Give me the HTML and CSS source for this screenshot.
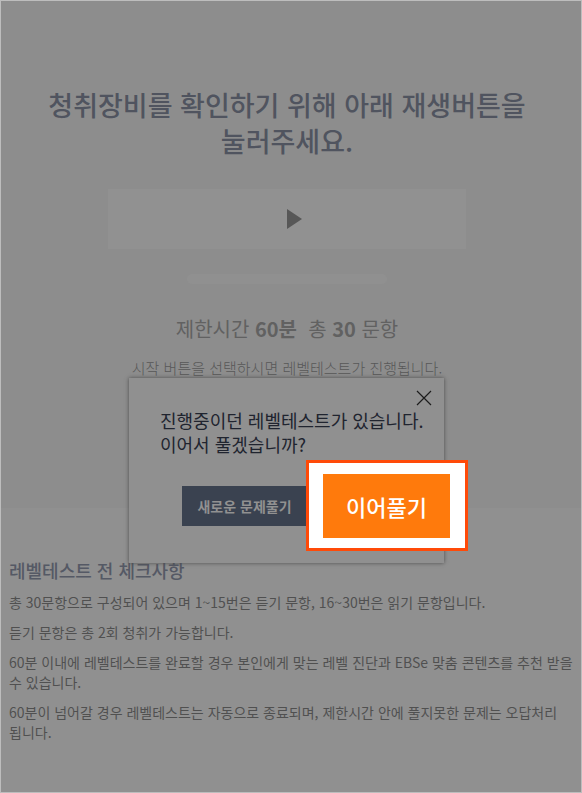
FILE: index.html
```html
<!DOCTYPE html>
<html lang="ko">
<head>
<meta charset="utf-8">
<meta name="viewport" content="width=device-width, initial-scale=1">
<title>레벨테스트</title>
<link rel="stylesheet" href="styles.css">
</head>
<body>
<main class="page">
  <section class="intro">
    <h1 class="intro-title">청취장비를 확인하기 위해 아래 재생버튼을<br>눌러주세요.</h1>
    <button class="player" type="button" aria-label="재생">
      <svg class="play-icon" viewBox="0 0 16 20" aria-hidden="true"><path d="M0 0 15 10 0 20Z"/></svg>
    </button>
    <div class="track"></div>
    <p class="limits">제한시간 <strong>60분</strong>&nbsp; 총 <strong>30</strong> 문항</p>
    <p class="guide">시작 버튼을 선택하시면 레벨테스트가 진행됩니다.</p>
  </section>
  <section class="checks">
    <h2 class="checks-title">레벨테스트 전 체크사항</h2>
    <p class="check">총 30문항으로 구성되어 있으며 1~15번은 듣기 문항, 16~30번은 읽기 문항입니다.</p>
    <p class="check">듣기 문항은 총 2회 청취가 가능합니다.</p>
    <p class="check">60분 이내에 레벨테스트를 완료할 경우 본인에게 맞는 레벨 진단과 EBSe 맞춤 콘텐츠를 추천 받을 수 있습니다.</p>
    <p class="check">60분이 넘어갈 경우 레벨테스트는 자동으로 종료되며, 제한시간 안에 풀지못한 문제는 오답처리 됩니다.</p>
  </section>
  <div class="dialog" role="dialog" aria-labelledby="dialog-text">
    <button class="close" type="button" aria-label="닫기">
      <svg class="close-icon" viewBox="0 0 16 16" aria-hidden="true"><path d="M1 1 15 15M15 1 1 15"/></svg>
    </button>
    <p class="dialog-text" id="dialog-text">진행중이던 레벨테스트가 있습니다.<br>이어서 풀겠습니까?</p>
    <button class="restart" type="button">새로운 문제풀기</button>
    <div class="spotlight">
      <button class="resume" type="button">이어풀기</button>
    </div>
  </div>
</main>
</body>
</html>
```
FILE: styles.css
```css
* {
  box-sizing: border-box;
}

body {
  margin: 0;
  font-family: "Noto Sans CJK KR", "Noto Sans", sans-serif;
  word-break: keep-all;
}

h1, h2, p {
  margin: 0;
}

button {
  border: 0;
  padding: 0;
  font-family: inherit;
  cursor: pointer;
}

.page {
  position: relative;
  min-height: 100vh;
  border: 1px solid #bdbdbd;
  background: #909090;
}

.intro {
  display: flex;
  flex-direction: column;
  align-items: center;
  padding: 86px 8px 130px 0;
  background: #8d8d8d;
  text-align: center;
}

.intro-title {
  font-size: 27px;
  line-height: 36px;
  font-weight: 500;
  color: #50545f;
}

.player {
  display: flex;
  align-items: center;
  justify-content: center;
  width: 358px;
  max-width: 100%;
  height: 60px;
  margin-top: 30px;
  padding-left: 16px;
  background: #919191;
}

.play-icon {
  width: 16px;
  height: 20px;
  fill: #575757;
}

.track {
  width: 200px;
  height: 10px;
  margin-top: 25px;
  border-radius: 5px;
  background: #909090;
}

.limits {
  margin-top: 30px;
  font-size: 20px;
  line-height: 30px;
  color: #616161;
}

.limits strong {
  font-weight: 700;
}

.guide {
  margin-top: 14px;
  font-size: 15px;
  line-height: 20px;
  font-weight: 300;
  color: #585858;
}

.checks {
  padding: 48px 0 40px 8px;
}

.checks-title {
  margin-bottom: 8px;
  font-size: 18px;
  line-height: 28px;
  font-weight: 500;
  color: #555965;
}

.check {
  margin-bottom: 10px;
  font-size: 14px;
  line-height: 20px;
  color: #505050;
}

.dialog {
  position: absolute;
  top: 377px;
  left: calc(50% - 162px);
  width: 315px;
  height: 185px;
  padding: 30px 0 0 31px;
  background: #909090;
  box-shadow: 0 0 4px #4c4c4c;
}

.close {
  position: absolute;
  top: 12px;
  right: 12px;
  width: 16px;
  height: 16px;
  background: none;
}

.close-icon {
  display: block;
  width: 16px;
  height: 16px;
  fill: none;
  stroke: #1c1c1c;
  stroke-width: 1.2;
}

.dialog-text {
  font-size: 18px;
  line-height: 24px;
  color: #20242f;
  white-space: nowrap;
}

.restart {
  width: 125px;
  height: 40px;
  margin: 30px 0 0 22px;
  background: #3a4250;
  color: #919191;
  font-size: 14px;
  font-weight: 700;
}

.spotlight {
  position: absolute;
  top: 82px;
  right: -24px;
  display: flex;
  padding: 11px 15px 10px 14px;
  border: 3px solid #ff4a08;
  background: #ffffff;
}

.resume {
  width: 127px;
  height: 64px;
  background: #ff7a0c;
  color: #ffffff;
  font-size: 22px;
  font-weight: 500;
}
```
